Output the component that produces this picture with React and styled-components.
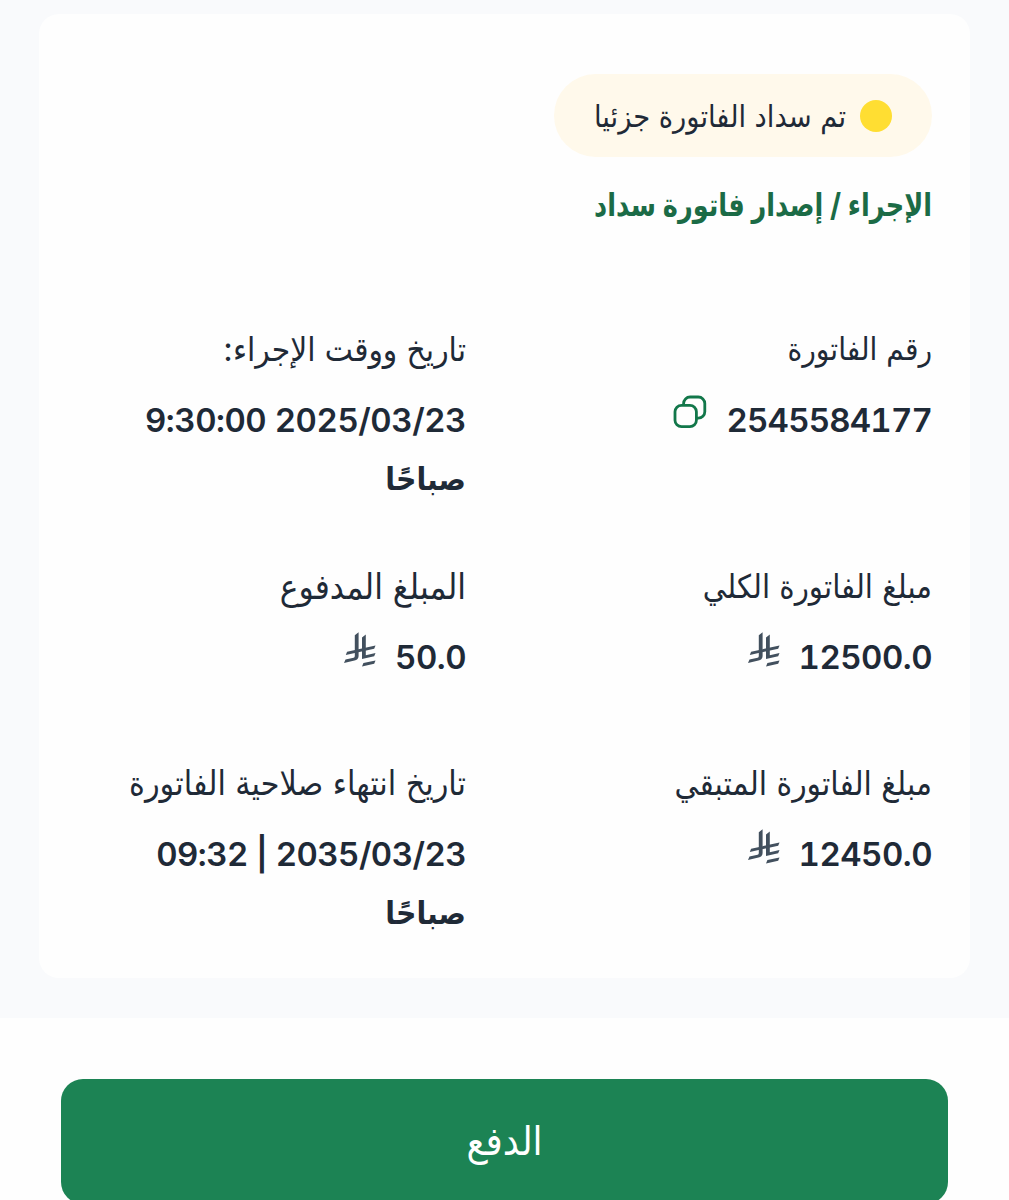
import React from 'react'
import styled, { createGlobalStyle } from 'styled-components'

const fields = [
  { label: 'رقم الفاتورة', value: '2545584177', icon: 'copy', size: 31.3, tracking: -0.8 },
  { label: 'تاريخ ووقت الإجراء:', value: '2025/03/23 9:30:00', period: 'صباحًا', size: 33.2, tracking: -0.45 },
  { label: 'مبلغ الفاتورة الكلي', value: '12500.0', icon: 'riyal', size: 32.6, tracking: -0.5 },
  { label: 'المبلغ المدفوع', value: '50.0', icon: 'riyal', size: 35, tracking: -0.5 },
  { label: 'مبلغ الفاتورة المتبقي', value: '12450.0', icon: 'riyal', size: 33.2, tracking: -0.5 },
  { label: 'تاريخ انتهاء صلاحية الفاتورة', value: '2035/03/23 | 09:32', period: 'صباحًا', size: 33.7, tracking: -0.55 },
]

function CopyIcon() {
  return (
    <svg width="34" height="34" viewBox="0 0 34 34" fill="none" stroke="#12774a" strokeWidth="2.8">
      <rect x="2" y="10.3" width="21.4" height="21.4" rx="6.5" />
      <path d="M10.6 10.3V8.5a6.5 6.5 0 0 1 6.5-6.5h8.2a6.5 6.5 0 0 1 6.5 6.5v8.2a6.5 6.5 0 0 1-6.5 6.5h-1.9" />
    </svg>
  )
}

function RiyalIcon() {
  return (
    <svg width="32" height="35" viewBox="0 0 32 35" fill="#42505e">
      <path d="M10.8 3.2 14.6.2V24q0 2-1.300 3.200Q12.300 28.200 10.500 28.600L0 30.900 1.500 27.600 9.600 25.800Q10.800 25.500 10.800 24Z" />
      <path d="M18 5.600 21.800 2.600V23.200L31.500 21.100 30.200 24.300 18 27Z" />
      <path d="M3.100 19.700 31.500 13.600 30.200 16.800 1.800 22.900Z" />
      <path d="M19.400 31 31.500 28.400 30.200 31.700 18 34.400Z" />
    </svg>
  )
}

function Field({ label, value, period, icon, size, tracking }) {
  return (
    <Cell>
      <Label $size={size}>{label}</Label>
      <ValueRow>
        <Value $tracking={tracking}>{value}</Value>
        {icon === 'copy' && <IconButton><CopyIcon /></IconButton>}
        {icon === 'riyal' && <Currency><RiyalIcon /></Currency>}
      </ValueRow>
      {period && <Period>{period}</Period>}
    </Cell>
  )
}

function App() {
  return (
    <Page dir="rtl">
      <GlobalStyle />
      <Panel>
        <Card>
          <Badge>
            <Dot />
            <BadgeText>تم سداد الفاتورة جزئيا</BadgeText>
          </Badge>
          <Title>الإجراء / إصدار فاتورة سداد</Title>
          <Fields>
            {fields.map((field) => (
              <Field key={field.label} {...field} />
            ))}
          </Fields>
        </Card>
      </Panel>
      <Footer>
        <PayButton>الدفع</PayButton>
      </Footer>
    </Page>
  )
}

export default App

const GlobalStyle = createGlobalStyle`
  * {
    box-sizing: border-box;
  }
  body {
    margin: 0;
    background: #fefefe;
    font-family: Inter, 'DejaVu Sans Condensed', 'DejaVu Sans', sans-serif;
    color: #1f2a37;
  }
`
const Page = styled.div`
  height: 1200px;
  overflow: hidden;
`
const Panel = styled.main`
  height: 1018px;
  padding: 14px 39px 40px;
  background: #f9fafc;
`
const Card = styled.section`
  height: 964px;
  padding: 60px 38px 0;
  border-radius: 20px;
  background: #fefefe;
`
const Badge = styled.div`
  display: flex;
  align-items: center;
  width: 378px;
  height: 83px;
  padding: 0 40px;
  gap: 14px;
  border-radius: 42px;
  background: #fff9eb;
`
const Dot = styled.span`
  flex: none;
  width: 32px;
  height: 32px;
  border-radius: 50%;
  background: #ffde32;
`
const BadgeText = styled.span`
  font-size: 30.4px;
  line-height: 54px;
  white-space: nowrap;
`
const Title = styled.h1`
  margin: 21px 0 90px;
  font-size: 32px;
  line-height: 54px;
  font-weight: 700;
  white-space: nowrap;
  transform: scaleX(0.89);
  transform-origin: right center;
  color: #1b6b46;
`
const Fields = styled.div`
  display: grid;
  grid-template-columns: 466px 1fr;
  grid-template-rows: 237px 197px auto;
`
const Cell = styled.div`
  min-width: 0;
`
const Label = styled.div`
  height: 54px;
  margin-bottom: 15px;
  font-size: ${(props) => props.$size}px;
  line-height: 54px;
  white-space: nowrap;
`
const ValueRow = styled.div`
  display: flex;
  align-items: flex-start;
  gap: 19px;
  height: 59px;
`
const Value = styled.span`
  font-size: 33px;
  line-height: 59px;
  font-weight: 600;
  font-variant-numeric: tabular-nums;
  letter-spacing: ${(props) => props.$tracking}px;
  white-space: nowrap;
`
const IconButton = styled.button`
  display: flex;
  padding: 0;
  margin-top: 4px;
  border: none;
  background: none;
  cursor: pointer;
`
const Currency = styled.span`
  display: flex;
  margin-top: 4px;
`
const Period = styled.div`
  font-size: 31.5px;
  line-height: 58px;
  font-weight: 700;
`
const Footer = styled.footer`
  padding: 61px 61px 0;
`
const PayButton = styled.button`
  display: block;
  width: 100%;
  height: 125px;
  padding: 0 0 3px;
  border: none;
  border-radius: 22px;
  background: #1c8354;
  color: #fff;
  font-family: inherit;
  font-size: 40px;
  cursor: pointer;
`
